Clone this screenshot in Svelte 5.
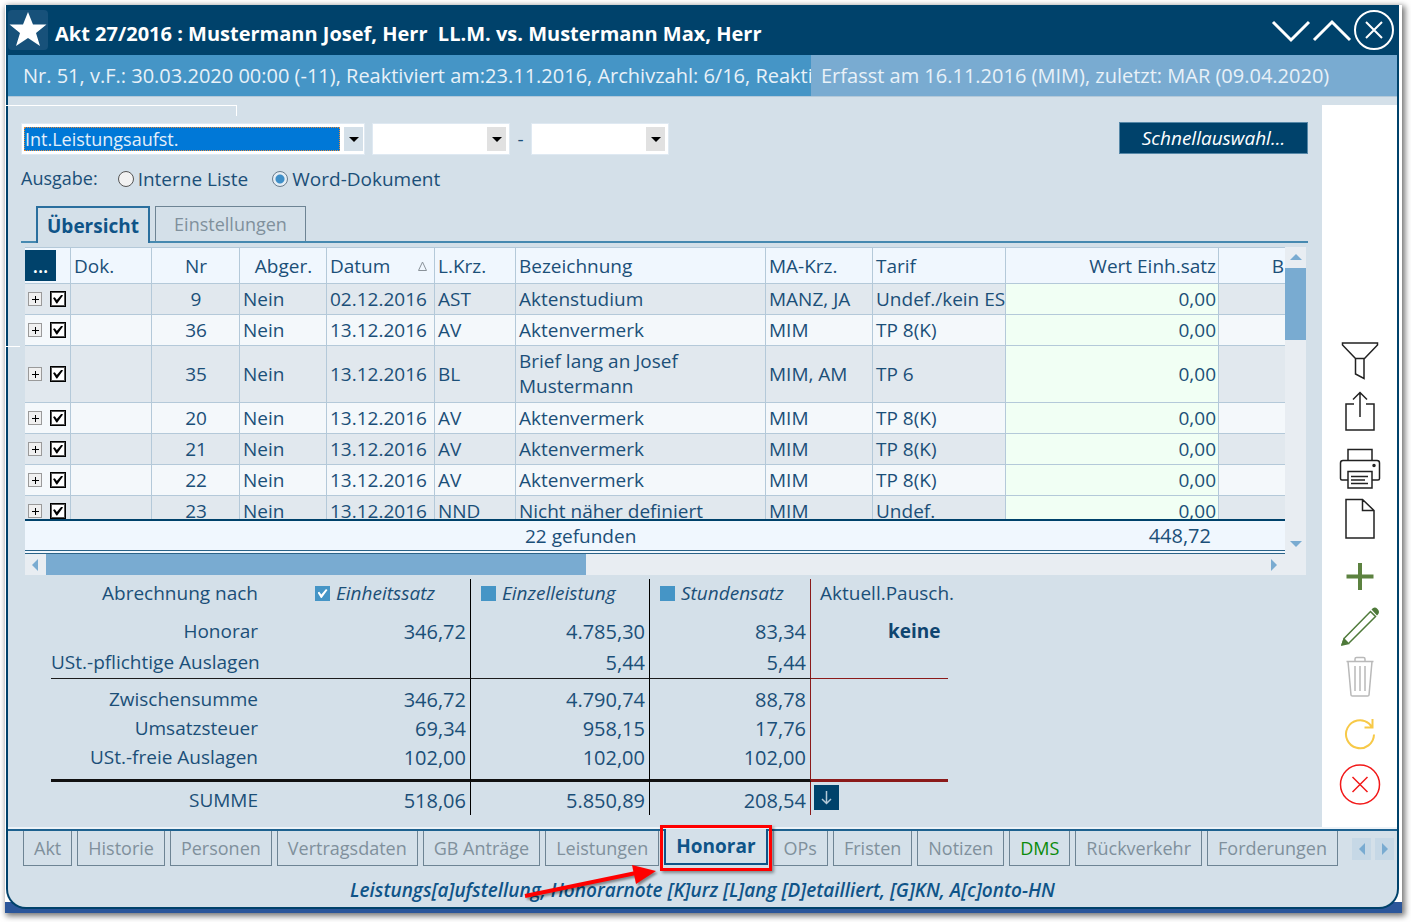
<script>
	let output = 'word';

	const rows = [
		{ nr: 9, date: '02.12.2016', code: 'AST', name: 'Aktenstudium', staff: 'MANZ, JA', tariff: 'Undef./kein ES' },
		{ nr: 36, date: '13.12.2016', code: 'AV', name: 'Aktenvermerk', staff: 'MIM', tariff: 'TP 8(K)' },
		{ nr: 35, date: '13.12.2016', code: 'BL', name: 'Brief lang an Josef Mustermann', staff: 'MIM, AM', tariff: 'TP 6' },
		{ nr: 20, date: '13.12.2016', code: 'AV', name: 'Aktenvermerk', staff: 'MIM', tariff: 'TP 8(K)' },
		{ nr: 21, date: '13.12.2016', code: 'AV', name: 'Aktenvermerk', staff: 'MIM', tariff: 'TP 8(K)' },
		{ nr: 22, date: '13.12.2016', code: 'AV', name: 'Aktenvermerk', staff: 'MIM', tariff: 'TP 8(K)' },
		{ nr: 23, date: '13.12.2016', code: 'NND', name: 'Nicht näher definiert', staff: 'MIM', tariff: 'Undef.' }
	];

	const modes = [
		{ label: 'Einheitssatz', checked: true },
		{ label: 'Einzelleistung', checked: false },
		{ label: 'Stundensatz', checked: false }
	];

	const sums = [
		{ label: 'Honorar', values: ['346,72', '4.785,30', '83,34'], kind: 'first' },
		{ label: 'USt.-pflichtige Auslagen', values: ['', '5,44', '5,44'], kind: 'line' },
		{ label: 'Zwischensumme', values: ['346,72', '4.790,74', '88,78'], kind: 'after' },
		{ label: 'Umsatzsteuer', values: ['69,34', '958,15', '17,76'], kind: '' },
		{ label: 'USt.-freie Auslagen', values: ['102,00', '102,00', '102,00'], kind: 'thick' },
		{ label: 'SUMME', values: ['518,06', '5.850,89', '208,54'], kind: 'total' }
	];

	const tabs = [
		'Akt',
		'Historie',
		'Personen',
		'Vertragsdaten',
		'GB Anträge',
		'Leistungen',
		'Honorar',
		'OPs',
		'Fristen',
		'Notizen',
		'DMS',
		'Rückverkehr',
		'Forderungen'
	];
</script>

<div class="desktop">
	<div class="backdrop">
		<span class="stray stray-top"></span>
		<span class="stray stray-side"></span>
		<div class="window">
			<header class="titlebar">
				<span class="star">
					<svg viewBox="0 0 40 40" aria-hidden="true"
						><path
							d="M20 2l5 12.500h13.500l-10.500 8.500 4 13-12-8-12 8 4-13-10.500-8.500h13.500z"
							fill="#fff"
						/></svg
					>
				</span>
				<h1>Akt 27/2016 : Mustermann Josef, Herr&nbsp; LL.M. vs. Mustermann Max, Herr</h1>
				<div class="controls">
					<button type="button" aria-label="Nach unten">
						<svg width="42" height="40" viewBox="0 0 42 40"
							><path d="M4 12l18 18 18-18" fill="none" stroke="#fff" stroke-width="3" /></svg
						>
					</button>
					<button type="button" aria-label="Nach oben">
						<svg width="42" height="40" viewBox="0 0 42 40"
							><path d="M3 30l18-18 18 18" fill="none" stroke="#fff" stroke-width="3" /></svg
						>
					</button>
					<button type="button" aria-label="Schließen">
						<svg width="42" height="42" viewBox="0 0 42 42" fill="none" stroke="#fff" stroke-width="2"
							><circle cx="21" cy="21" r="19" /><path d="M13 13l16 16M29 13l-16 16" /></svg
						>
					</button>
				</div>
			</header>

			<div class="infobar">
				<div class="info-main">
					Nr. 51, v.F.: 30.03.2020 00:00 (-11), Reaktiviert am:23.11.2016, Archivzahl: 6/16, Reaktiviert
				</div>
				<div class="info-side">Erfasst am 16.11.2016 (MIM), zuletzt: MAR (09.04.2020)</div>
			</div>

			<div class="body">
				<main>
					<div class="filters">
						<span class="combo combo-wide">
							<select aria-label="Aufstellung"><option>Int.Leistungsaufst.</option></select>
							<span class="arrow"></span>
						</span>
						<span class="combo">
							<select aria-label="Von"><option></option></select>
							<span class="arrow"></span>
						</span>
						<span class="dash">-</span>
						<span class="combo">
							<select aria-label="Bis"><option></option></select>
							<span class="arrow"></span>
						</span>
						<button class="quick" type="button">Schnellauswahl...</button>
					</div>

					<div class="output">
						<span class="caption">Ausgabe:</span>
						<label><input type="radio" name="output" value="list" bind:group={output} />Interne Liste</label>
						<label><input type="radio" name="output" value="word" bind:group={output} />Word-Dokument</label>
					</div>

					<div class="views">
						<button class="view is-active" type="button">Übersicht</button>
						<button class="view" type="button">Einstellungen</button>
					</div>

					<div class="grid">
						<div class="grid-rows">
							<table>
								<colgroup>
									<col class="c-tools" />
									<col class="c-doc" />
									<col class="c-nr" />
									<col class="c-billed" />
									<col class="c-date" />
									<col class="c-code" />
									<col class="c-name" />
									<col class="c-staff" />
									<col class="c-tariff" />
									<col class="c-value" />
									<col />
								</colgroup>
								<thead>
									<tr>
										<th class="tools"><button class="more" type="button" aria-label="Mehr">...</button></th>
										<th>Dok.</th>
										<th class="center">Nr</th>
										<th class="center">Abger.</th>
										<th>
											<span class="sorted">
												Datum
												<svg width="9" height="10" viewBox="0 0 9 10" aria-hidden="true"
													><path d="M4.500 1L8.500 9.500H.5z" fill="none" stroke="#8a9299" /></svg
												>
											</span>
										</th>
										<th>L.Krz.</th>
										<th>Bezeichnung</th>
										<th>MA-Krz.</th>
										<th>Tarif</th>
										<th class="right">Wert Einh.satz</th>
										<th class="right cut">B</th>
									</tr>
								</thead>
								<tbody>
									{#each rows as row}
										<tr>
											<td class="tools">
												<span class="tool-row">
													<button class="expand" type="button" aria-label="Details {row.nr}">
														<svg width="7" height="7" viewBox="0 0 7 7"
															><path d="M3.500 0v7M0 3.500h7" stroke="#000" /></svg
														>
													</button>
													<input class="pick" type="checkbox" checked aria-label="Leistung {row.nr}" />
												</span>
											</td>
											<td></td>
											<td class="center">{row.nr}</td>
											<td>Nein</td>
											<td>{row.date}</td>
											<td>{row.code}</td>
											<td class="wrap">{row.name}</td>
											<td>{row.staff}</td>
											<td>{row.tariff}</td>
											<td class="right value">0,00</td>
											<td></td>
										</tr>
									{/each}
								</tbody>
							</table>
						</div>
						<div class="grid-foot">
							<span class="found">22 gefunden</span>
							<span class="total-value">448,72</span>
						</div>
						<div class="vscroll">
							<i class="tri up"></i>
							<span class="thumb"></span>
							<i class="tri down"></i>
						</div>
						<div class="hscroll">
							<i class="tri left"></i>
							<span class="thumb"></span>
							<i class="tri right-tri"></i>
						</div>
					</div>

					<table class="sums">
						<thead>
							<tr>
								<th>Abrechnung nach</th>
								{#each modes as mode}
									<th class="mode">
										<label><input type="checkbox" checked={mode.checked} />{mode.label}</label>
									</th>
								{/each}
								<th class="flat">Aktuell.Pausch.</th>
							</tr>
						</thead>
						<tbody>
							{#each sums as sum, i}
								<tr class={sum.kind}>
									<th>{sum.label}</th>
									{#each sum.values as value}
										<td>{value}</td>
									{/each}
									<td class="flat">
										{#if i === 0}
											<strong>keine</strong>
										{:else if sum.kind === 'total'}
											<button class="take" type="button" aria-label="Übernehmen">
												<svg width="25" height="25" viewBox="0 0 25 25"
													><path
														d="M12.500 6v12M8 14l4.500 4.500L17 14"
														fill="none"
														stroke="#b5c9d8"
														stroke-width="1.500"
													/></svg
												>
											</button>
										{/if}
									</td>
								</tr>
							{/each}
						</tbody>
					</table>
				</main>

				<aside>
					<div class="group">
						<button type="button" aria-label="Filtern">
							<svg viewBox="0 0 42 42" stroke="#222"
								><path d="M3.500 3h35v2L25.500 18.500h-9L3.500 5zM16.500 18.500V34l8.500 4.500v-20" /></svg
							>
						</button>
						<button type="button" aria-label="Teilen">
							<svg viewBox="0 0 42 42" stroke="#222"
								><path d="M15 14H7v26h28V14h-8M21 27V3M14 9.500L21 2.500l7 7" /></svg
							>
						</button>
					</div>
					<div class="group">
						<button type="button" aria-label="Drucken">
							<svg viewBox="0 0 42 42" stroke="#222"
								><path
									d="M9 12V1.500h24V12M9 32H3q-1.500 0-1.500-1.500V15q0-2.500 2.500-2.500h34q2.500 0 2.500 2.500v15.500q0 1.500-1.500 1.500h-6M9 23.500h24V40H9zM12 28.500h17M12 32h14M12 35.500h17"
								/><circle cx="35" cy="17.500" r="1" fill="#222" /></svg
							>
						</button>
						<button type="button" aria-label="Neues Dokument">
							<svg viewBox="0 0 42 42" stroke="#222"
								><path d="M7 1.500h16.500L35 12.500V40H7zM23.500 1.500v11H35" /></svg
							>
						</button>
					</div>
					<div class="group">
						<button type="button" aria-label="Hinzufügen">
							<svg class="bold" viewBox="0 0 42 42" stroke="#5c8240"><path d="M21 7v27M7.500 20.500h27" /></svg>
						</button>
						<button type="button" aria-label="Bearbeiten">
							<svg viewBox="0 0 42 42" stroke="#4f7a3a"
								><path d="M5.500 32L31.500 5.500l5 5L10 37M5.500 32L3 39" /><path
									d="M33.500 3.500q2-2.500 4.500 0t0 5zM5 33l4.500 4.500L3 39z"
									fill="#4f7a3a"
								/></svg
							>
						</button>
						<button type="button" aria-label="Löschen">
							<svg viewBox="0 0 42 42" stroke="#b9b9b9"
								><path
									d="M7.500 5.500h27M16 5.500V3q0-1.500 1.500-1.500h7Q26 1.500 26 3v2.500M9 5.500L12 39q0 1 1.500 1h15q1.500 0 1.500-1l3-33.500M16 10v25M21 10v25M26 10v25"
								/></svg
							>
						</button>
					</div>
					<div class="group">
						<button type="button" aria-label="Aktualisieren">
							<svg viewBox="0 0 42 42" stroke="#f7c948"
								><path d="M35 20.500A14 14 0 1 1 30 9.500L33 13M33.500 5v8.500H25.500" stroke-width="2" /></svg
							>
						</button>
						<button type="button" aria-label="Abbrechen">
							<svg viewBox="0 0 42 42" stroke="#f21a1a"
								><circle cx="21" cy="20.500" r="19.500" /><path d="M13.500 13l15 15M28.500 13l-15 15" /></svg
							>
						</button>
					</div>
				</aside>
			</div>

			<nav>
				{#each tabs as tab}
					<button class="tab" class:is-active={tab === 'Honorar'} class:is-green={tab === 'DMS'} type="button">
						{tab}
						{#if tab === 'Honorar'}
							<span class="marker"></span>
							<svg class="pointer" width="134" height="40" viewBox="0 0 134 40" aria-hidden="true"
								><path d="M1 33L112 10" stroke="#f00" stroke-width="4" /><path
									d="M108 2l24 6-20 13z"
									fill="#f00"
								/></svg
							>
						{/if}
					</button>
				{/each}
				<span class="pager">
					<button type="button" aria-label="Zurück"><i class="tri left"></i></button>
					<button type="button" aria-label="Weiter"><i class="tri right-tri"></i></button>
				</span>
			</nav>

			<footer>Leistungs[a]ufstellung, Honorarnote [K]urz [L]ang [D]etailliert, [G]KN, A[c]onto-HN</footer>
		</div>
	</div>
</div>

<style>
	:global(body) {
		background: #fff;
	}

	.desktop {
		--navy: #00426b;
		--blue: #4595c6;
		--sky: #79abd1;
		--pale: #d4e0e9;
		--ink: #1b4f78;
		--line: #b4c9d9;

		box-sizing: border-box;
		min-height: 100vh;
		padding: 5px 9px 9px 5px;
		display: flex;
		font: 19px/26px 'Open Sans', 'Noto Sans', sans-serif;
		color: var(--ink);
	}

	button,
	select,
	input {
		box-sizing: border-box;
		margin: 0;
		font: inherit;
		color: inherit;
	}

	button {
		padding: 0;
		border: 0;
		background: none;
		cursor: pointer;
	}

	svg {
		display: block;
	}

	.backdrop {
		position: relative;
		flex: 1;
		min-width: 0;
		box-sizing: border-box;
		padding: 0 3px 4px 1px;
		display: flex;
		background: linear-gradient(0deg, #2b569a 11px, #fff 11px);
		box-shadow: 2px 2px 6px 1px rgba(0, 0, 0, 0.55);
	}

	.stray {
		position: absolute;
		z-index: 1;
		border-top: 1px solid #fff;
	}

	.stray-top {
		top: 100px;
		left: 0;
		width: 231px;
		height: 10px;
		border-right: 1px solid #fff;
	}

	.stray-side {
		top: 341px;
		left: 0;
		width: 15px;
	}

	.window {
		flex: 1;
		min-width: 0;
		display: flex;
		flex-direction: column;
		border: 2px solid var(--navy);
		border-top: 0;
		border-radius: 0 0 20px 20px;
		background: var(--pale);
		overflow: hidden;
	}

	.titlebar {
		height: 50px;
		display: flex;
		align-items: center;
		background: var(--navy);
		color: #fff;
	}

	.star {
		width: 40px;
		height: 40px;
		border-radius: 4px;
		background: #17517a;
	}

	h1 {
		flex: 1;
		margin: 0;
		padding: 8px 0 0 7px;
		font-size: 20px;
		font-weight: 700;
		white-space: nowrap;
	}

	.controls {
		display: flex;
		align-items: center;
		padding-right: 2px;
	}

	.infobar {
		height: 41px;
		display: flex;
		line-height: 42px;
		font-size: 20px;
		color: #e8f1f8;
		white-space: nowrap;
		border-bottom: 1px solid #b4c9d9;
	}

	.info-main {
		flex: 1;
		padding-left: 15px;
		background: var(--blue);
		overflow: hidden;
	}

	.info-side {
		width: 576px;
		padding-left: 10px;
		background: var(--sky);
	}

	.body {
		flex: 1;
		display: flex;
		padding-top: 8px;
	}

	main {
		flex: 1;
		min-width: 0;
		padding: 17px 14px 0 13px;
	}

	.filters {
		display: flex;
		align-items: center;
		height: 34px;
	}

	.combo {
		box-sizing: border-box;
		width: 138px;
		height: 32px;
		padding: 3px;
		display: flex;
		gap: 3px;
		background: #fff;
		border: 1px solid #dfe9f2;
	}

	.combo-wide {
		width: 344px;
		margin-right: 7px;
		padding: 3px 1px 3px 2px;
		gap: 4px;
	}

	.combo select {
		flex: 1;
		min-width: 0;
		padding: 0;
		border: 0;
		appearance: none;
		background: #fff;
		outline: 0;
	}

	.combo-wide select {
		border: 1px dotted #e08a3c;
		background: #0078d7;
		color: #e3effa;
		font-size: 18px;
		line-height: 22px;
	}

	.arrow {
		width: 19px;
		display: grid;
		place-items: center;
		background: #e1e1e1;
	}

	.combo-wide .arrow {
		background: var(--pale);
	}

	.arrow::before {
		content: '';
		border: 5px solid transparent;
		border-top-color: #000;
		border-bottom: 0;
	}

	.dash {
		width: 21px;
		text-align: center;
	}

	.quick {
		width: 189px;
		height: 32px;
		margin: 0 0 2px auto;
		border: 1px solid #5688a8;
		background: var(--navy);
		color: #fff;
		font-style: italic;
	}

	.output {
		display: flex;
		padding-top: 9px;
		height: 41px;
		box-sizing: border-box;
	}

	.caption {
		font-size: 18px;
	}

	.output label {
		display: flex;
		align-items: center;
		gap: 4px;
		height: 28px;
		margin-left: 20px;
	}

	.output label + label {
		margin-left: 24px;
	}

	.output input {
		appearance: none;
		width: 16px;
		height: 16px;
		border: 1px solid #555;
		border-radius: 50%;
		background: #f2f2f2;
	}

	.output input:checked {
		border-color: #6a7c8c;
		background: radial-gradient(circle, #3f8fc8 4px, #e4edf4 5px);
	}

	.views {
		display: flex;
		gap: 5px;
		padding: 9px 0 0 15px;
		border-bottom: 2px solid #4689b0;
	}

	.view {
		width: 151px;
		height: 35px;
		border: 1px solid #6d8494;
		border-bottom: 0;
		color: #80909c;
		font-size: 18px;
	}

	.view.is-active {
		width: 114px;
		height: 37px;
		margin-bottom: -2px;
		border: 2px solid #2a6f9e;
		border-bottom: 0;
		background: var(--pale);
		color: #0f5488;
		font-size: 19px;
		font-weight: 700;
	}

	.grid {
		display: grid;
		grid-template-columns: minmax(0, 1fr) 21px;
		grid-template-rows: 272px 35px 21px;
		margin: 4px 2px 0 4px;
		background: #e8edf2;
	}

	.grid-rows {
		overflow: hidden;
	}

	.grid-rows table {
		width: 100%;
		table-layout: fixed;
		border-spacing: 0;
		border-top: 1px solid var(--line);
	}

	.c-tools {
		width: 46px;
	}

	.c-doc,
	.c-code {
		width: 81px;
	}

	.c-nr {
		width: 88px;
	}

	.c-billed {
		width: 87px;
	}

	.c-date {
		width: 108px;
	}

	.c-name {
		width: 250px;
	}

	.c-staff {
		width: 107px;
	}

	.c-tariff {
		width: 133px;
	}

	.c-value {
		width: 213px;
	}

	.grid-rows th,
	.grid-rows td {
		box-sizing: border-box;
		height: 31px;
		padding: 0 2px 0 3px;
		border-right: 1px solid var(--line);
		border-bottom: 1px solid var(--line);
		text-align: left;
		font-weight: 400;
		white-space: nowrap;
	}

	.grid-rows th {
		height: 36px;
		background: #f0f7fe;
	}

	.grid-rows th:last-child,
	.grid-rows td:last-child {
		border-right: 0;
	}

	.grid-rows tbody tr:nth-child(odd) {
		background: #e1e8ee;
	}

	.grid-rows tbody tr:nth-child(even) {
		background: #f4f8fb;
	}

	.grid-rows td:nth-child(9) {
		padding-right: 0;
	}

	.grid-rows .center {
		text-align: center;
	}

	.grid-rows .right {
		text-align: right;
	}

	.grid-rows .cut {
		padding-right: 1px;
	}

	.grid-rows .wrap {
		white-space: normal;
		line-height: 25px;
		padding: 3px 60px 3px 3px;
	}

	.grid-rows tr:not(:nth-child(3)) .wrap {
		padding: 0 2px 0 3px;
	}

	.grid-rows .value {
		background: #f1fff4;
	}

	.grid-rows .tools {
		padding: 0;
	}

	.more {
		width: 31px;
		height: 31px;
		background: var(--navy);
		color: #fff;
		font-weight: 600;
		display: block;
	}

	.sorted {
		display: flex;
		align-items: center;
		justify-content: space-between;
		padding-right: 5px;
	}

	.tool-row {
		display: flex;
		align-items: center;
		gap: 8px;
		padding-left: 3px;
	}

	.expand {
		width: 14px;
		height: 14px;
		display: grid;
		place-items: center;
		border: 1px solid #9a9a9a;
		background: #f0f0f0;
	}

	.pick {
		appearance: none;
		width: 16px;
		height: 16px;
		border: 1px solid #000;
		outline: 1px solid #555;
		outline-offset: -2px;
		background: #fff;
		display: grid;
		place-items: center;
	}

	.pick::before,
	.mode input:checked::before {
		content: '';
		width: 10px;
		height: 9px;
		background: #000;
		clip-path: polygon(0 40%, 18% 30%, 38% 60%, 85% 0, 100% 12%, 42% 100%, 34% 100%);
	}

	.grid-foot {
		grid-column: 1;
		display: flex;
		align-items: center;
		justify-content: space-between;
		padding: 0 74px 0 500px;
		border-top: 2px solid var(--navy);
		border-bottom: 4px double #2a6388;
		background: #f0f7fe;
	}

	.total-value {
		font-size: 20px;
	}

	.vscroll {
		grid-area: 1 / 2 / 3 / 3;
		display: flex;
		flex-direction: column;
		align-items: center;
		padding: 7px 0;
	}

	.vscroll .thumb {
		width: 21px;
		height: 72px;
		margin: 8px 0 auto;
		background: var(--sky);
	}

	.hscroll {
		grid-area: 3 / 1 / 4 / 2;
		display: flex;
		align-items: center;
		padding: 0 8px 0 7px;
	}

	.hscroll .thumb {
		width: 540px;
		height: 21px;
		margin: 0 auto 0 8px;
		background: var(--sky);
	}

	.tri {
		width: 0;
		height: 0;
		border: 6px solid transparent;
	}

	.tri.up {
		border-top: 0;
		border-bottom-color: var(--sky);
	}

	.tri.down {
		border-bottom: 0;
		border-top-color: var(--sky);
	}

	.tri.left {
		border-left: 0;
		border-right-color: var(--sky);
	}

	.tri.right-tri {
		border-right: 0;
		border-left-color: var(--sky);
	}

	.sums {
		table-layout: fixed;
		width: 897px;
		margin: 4px 0 0 30px;
		border-spacing: 0;
		line-height: 29px;
	}

	.sums th,
	.sums td {
		height: 29px;
		padding: 0 4px 0 0;
		font-weight: 400;
		text-align: right;
		white-space: nowrap;
	}

	.sums td:not(.flat) {
		font-size: 20px;
	}

	.sums th:first-child {
		width: 207px;
		padding-right: 0;
	}

	.sums th:nth-child(2) {
		width: 208px;
	}

	.sums th:nth-child(3) {
		width: 174px;
	}

	.sums th:nth-child(4) {
		width: 156px;
	}

	.sums td:not(.flat),
	.sums .mode {
		border-right: 1px solid #000;
	}

	.sums td:nth-child(4):not(.flat),
	.sums th:nth-child(4) {
		border-right-color: #8b1a1a;
	}

	.mode label {
		display: flex;
		align-items: center;
		gap: 6px;
		padding-left: 10px;
		font-style: italic;
	}

	.mode:nth-child(2) label {
		padding-left: 57px;
	}

	.mode input {
		appearance: none;
		width: 15px;
		height: 15px;
		display: grid;
		place-items: center;
		background: var(--blue);
	}

	.mode input:checked::before {
		background: #fff;
	}

	.sums .flat {
		padding: 0 0 0 9px;
		text-align: left;
	}

	.sums strong {
		display: block;
		padding-left: 68px;
		font-weight: 700;
		color: #0f4570;
	}

	.sums .first > * {
		height: 38px;
		vertical-align: bottom;
	}

	.sums .line > * {
		height: 32px;
		border-bottom: 1px solid #1c1c1c;
	}

	.sums .after > * {
		height: 35px;
		vertical-align: bottom;
	}

	.sums .thick > * {
		height: 36px;
		vertical-align: top;
		border-bottom: 3px solid #111;
	}

	.sums .line .flat,
	.sums .thick .flat {
		border-bottom-color: #8b1a1a;
	}

	.sums .total > * {
		height: 33px;
		vertical-align: bottom;
	}

	.sums .total .flat {
		padding-left: 3px;
		vertical-align: top;
	}

	.take {
		display: block;
		margin-top: 3px;
		background: var(--navy);
	}

	aside {
		width: 75px;
		padding-bottom: 19px;
		display: flex;
		flex-direction: column;
		justify-content: flex-end;
		align-items: center;
		gap: 8px;
		background: #fff;
	}

	.group {
		display: flex;
		flex-direction: column;
	}

	.group button {
		width: 50px;
		height: 50px;
		display: grid;
		place-items: center;
	}

	.group svg {
		width: 42px;
		height: 42px;
		fill: none;
		stroke-width: 1.5;
	}

	.group svg.bold {
		stroke-width: 4;
	}

	nav {
		display: flex;
		gap: 5px;
		padding-left: 15px;
		border-top: 2px solid #1d618f;
		box-shadow: 0 -2px 0 #edf3f8;
	}

	.tab {
		position: relative;
		height: 35px;
		padding: 0 10px;
		border: 1px solid #6d8494;
		border-top: 0;
		color: #80909c;
		font-size: 18px;
		white-space: nowrap;
	}

	.tab.is-active {
		margin-top: -2px;
		height: 36px;
		border: 2px solid #0f5488;
		border-top: 0;
		background: var(--pale);
		color: #0f5488;
		font-size: 19px;
		font-weight: 700;
	}

	.tab.is-green {
		color: #0a8a0a;
	}

	.marker {
		position: absolute;
		inset: -4px -6px -8px;
		border: 3px solid #f00;
		box-shadow: 2px 2px 3px rgba(0, 0, 0, 0.4);
	}

	.pointer {
		position: absolute;
		top: 34px;
		right: 108px;
		filter: drop-shadow(2px 2px 1px rgba(0, 0, 0, 0.4));
	}

	.pager {
		display: flex;
		align-items: center;
		gap: 4px;
		margin: 0 3px 0 auto;
	}

	.pager button {
		width: 19px;
		height: 22px;
		display: grid;
		place-items: center;
		background: #c6d8e6;
	}

	footer {
		padding: 11px 0 4px;
		text-align: center;
		font-weight: 600;
		font-style: italic;
		color: #0f5488;
	}
</style>
